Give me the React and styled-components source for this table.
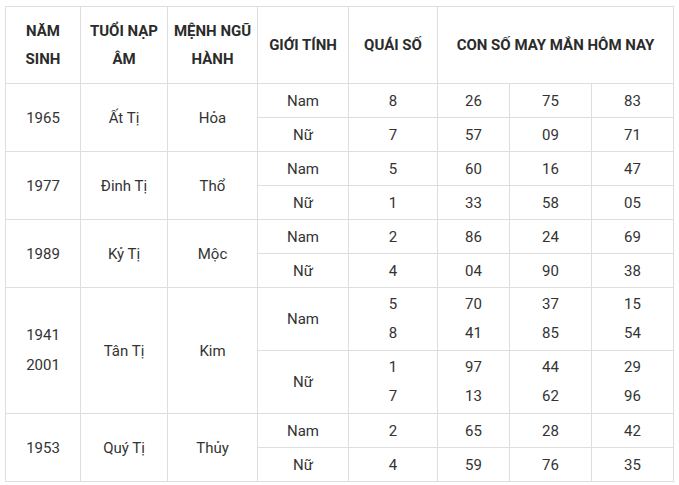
import React from "react";
import styled, { createGlobalStyle } from "styled-components";

const Global = createGlobalStyle`
  html, body { margin: 0; padding: 0; background: #fff; }
  body { font-family: Roboto, "Liberation Sans", Arial, sans-serif; }
`;

const Page = styled.div`
  padding: 6px 0 0 5px;
`;

const Table = styled.table`
  border-collapse: collapse;
  table-layout: fixed;
  width: 669px;
  color: #333;
  font-size: 15px;
`;

const Row = styled.tr`
  height: ${(p) => p.$h}px;
`;

const Th = styled.th`
  border: 1px solid #dedede;
  font-weight: 700;
  color: #2b2b2b;
  line-height: 28px;
  text-align: center;
  vertical-align: middle;
  padding: 0 4px;
`;

const Td = styled.td`
  border: 1px solid #dedede;
  font-weight: 400;
  line-height: ${(p) => (p.$multi ? "29.5px" : "20px")};
  text-align: center;
  vertical-align: middle;
  padding: 0;
`;

const widths = [75, 87, 90, 91, 89, 72, 82, 82];

const groups = [
  {
    year: ["1965"], tuoi: "Ất Tị", menh: "Hỏa",
    rows: [
      { g: "Nam", q: ["8"], n: [["26"], ["75"], ["83"]] },
      { g: "Nữ", q: ["7"], n: [["57"], ["09"], ["71"]] },
    ],
  },
  {
    year: ["1977"], tuoi: "Đinh Tị", menh: "Thổ",
    rows: [
      { g: "Nam", q: ["5"], n: [["60"], ["16"], ["47"]] },
      { g: "Nữ", q: ["1"], n: [["33"], ["58"], ["05"]] },
    ],
  },
  {
    year: ["1989"], tuoi: "Kỷ Tị", menh: "Mộc",
    rows: [
      { g: "Nam", q: ["2"], n: [["86"], ["24"], ["69"]] },
      { g: "Nữ", q: ["4"], n: [["04"], ["90"], ["38"]] },
    ],
  },
  {
    year: ["1941", "2001"], tuoi: "Tân Tị", menh: "Kim", tall: true,
    rows: [
      { g: "Nam", q: ["5", "8"], n: [["70", "41"], ["37", "85"], ["15", "54"]] },
      { g: "Nữ", q: ["1", "7"], n: [["97", "13"], ["44", "62"], ["29", "96"]] },
    ],
  },
  {
    year: ["1953"], tuoi: "Quý Tị", menh: "Thủy",
    rows: [
      { g: "Nam", q: ["2"], n: [["65"], ["28"], ["42"]] },
      { g: "Nữ", q: ["4"], n: [["59"], ["76"], ["35"]] },
    ],
  },
];

const Lines = ({ items }) =>
  items.map((t, i) => (
    <React.Fragment key={i}>
      {i > 0 && <br />}
      {t}
    </React.Fragment>
  ));

export default function App() {
  return (
    <Page>
      <Global />
      <Table>
        <colgroup>
          {widths.map((w, i) => (
            <col key={i} style={{ width: w }} />
          ))}
        </colgroup>
        <tbody>
          <Row $h={77}>
            <Th>NĂM<br />SINH</Th>
            <Th>TUỔI NẠP<br />ÂM</Th>
            <Th>MỆNH NGŨ<br />HÀNH</Th>
            <Th>GIỚI TÍNH</Th>
            <Th>QUÁI SỐ</Th>
            <Th colSpan={3}>CON SỐ MAY MẮN HÔM NAY</Th>
          </Row>
          {groups.map((grp, gi) =>
            grp.rows.map((r, ri) => (
              <Row key={`${gi}-${ri}`} $h={grp.tall ? 63 : 34}>
                {ri === 0 && (
                  <>
                    <Td rowSpan={2} $multi={grp.year.length > 1}>
                      <Lines items={grp.year} />
                    </Td>
                    <Td rowSpan={2}>{grp.tuoi}</Td>
                    <Td rowSpan={2}>{grp.menh}</Td>
                  </>
                )}
                <Td>{r.g}</Td>
                <Td $multi={r.q.length > 1}>
                  <Lines items={r.q} />
                </Td>
                {r.n.map((c, ci) => (
                  <Td key={ci} $multi={c.length > 1}>
                    <Lines items={c} />
                  </Td>
                ))}
              </Row>
            ))
          )}
        </tbody>
      </Table>
    </Page>
  );
}
